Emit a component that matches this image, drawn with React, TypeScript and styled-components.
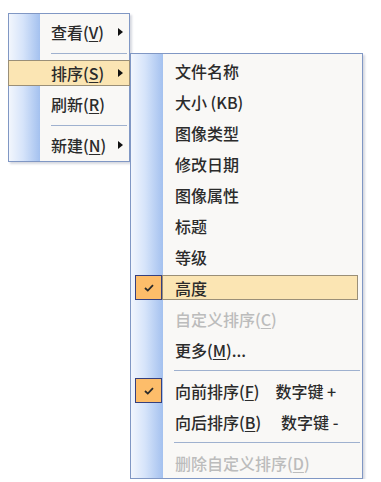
import styled, { createGlobalStyle } from "styled-components";

const GlobalStyle = createGlobalStyle`
  html, body {
    margin: 0;
    padding: 0;
    background: #ffffff;
  }
  body {
    font-family: "Noto Sans CJK SC", "Noto Sans", sans-serif;
  }
`;

const gutter = (w: number) =>
  `linear-gradient(to right, #f2f6fd 0, #d6e4fa ${Math.round(w * 0.45)}px, #a4c1ef ${w}px, #f9f8f6 ${w}px)`;

const Stage = styled.div`
  display: flex;
  align-items: flex-start;
  padding: 13px 0 0 8px;
`;

const Menu = styled.div<{ $width: number; $top?: number; $gutter: number }>`
  box-sizing: border-box;
  width: ${({ $width }) => $width}px;
  margin-top: ${({ $top }) => $top ?? 0}px;
  border: 1px solid #8097c4;
  background: ${({ $gutter }) => gutter($gutter)};
  box-shadow: 2px 2px 2px rgba(90, 100, 130, 0.25);
  display: flex;
  flex-direction: column;
  position: relative;
`;

const LeftMenu = styled(Menu)`
  padding: 3px 0 0 0;
  z-index: 1;
`;

const SubMenu = styled(Menu)`
  padding: 1px 0 0 0;
  z-index: 2;
`;

const Row = styled.div`
  display: flex;
  height: 31px;
  box-sizing: border-box;
  font-size: 16px;
  font-weight: 500;
  color: #2b2b2b;
`;

const LeftRow = styled(Row)`
  padding: 2px 0 3px 0;
  margin: 0 -1px;
`;

const SubRow = styled(Row)`
  padding: 3px 4px 3px 4px;
`;

const Label = styled.div<{ $hot?: boolean; $indent: number; $disabled?: boolean }>`
  flex: 1;
  display: flex;
  align-items: center;
  box-sizing: border-box;
  padding-left: ${({ $indent }) => $indent}px;
  border: 1px solid ${({ $hot }) => ($hot ? "#9a8f78" : "transparent")};
  background: ${({ $hot }) => ($hot ? "#fbe5b3" : "transparent")};
  color: ${({ $disabled }) => ($disabled ? "#bcbcbc" : "#2b2b2b")};
  white-space: nowrap;
`;

const CheckCell = styled.div<{ $checked?: boolean }>`
  flex: none;
  width: 27px;
  box-sizing: border-box;
  display: flex;
  align-items: center;
  justify-content: center;
  border: 1px solid ${({ $checked }) => ($checked ? "#36407e" : "transparent")};
  background: ${({ $checked }) => ($checked ? "#fdbd6a" : "transparent")};
`;

const Key = styled.span`
  text-decoration: underline;
  text-underline-offset: 2px;
`;

const Shortcut = styled.span<{ $gap: number }>`
  margin-left: ${({ $gap }) => $gap}px;
`;

const Arrow = styled.span`
  margin-left: auto;
  margin-right: 6px;
  width: 0;
  height: 0;
  border-left: 5px solid #111;
  border-top: 4px solid transparent;
  border-bottom: 4px solid transparent;
`;

const Separator = styled.div<{ $indent: number }>`
  height: 10px;
  display: flex;
  align-items: center;
  padding-left: ${({ $indent }) => $indent}px;
  padding-right: 2px;

  &::after {
    content: "";
    flex: 1;
    height: 1px;
    background: #9fb1cf;
  }
`;

const Check = () => (
  <svg width="10" height="8" viewBox="0 0 10 8">
    <path d="M1 4 L3.8 6.6 L9 1.2" fill="none" stroke="#2a2a2a" strokeWidth="1.8" />
  </svg>
);

const Mn = ({ text, k, tail = "" }: { text: string; k: string; tail?: string }) => (
  <>
    {text}(<Key>{k}</Key>){tail}
  </>
);

type SubEntry = {
  text?: React.ReactNode;
  checked?: boolean;
  hot?: boolean;
  disabled?: boolean;
  sep?: boolean;
};

const subItems: SubEntry[] = [
  { text: "文件名称" },
  { text: "大小 (KB)" },
  { text: "图像类型" },
  { text: "修改日期" },
  { text: "图像属性" },
  { text: "标题" },
  { text: "等级" },
  { text: "高度", checked: true, hot: true },
  { text: <Mn text="自定义排序" k="C" />, disabled: true },
  { text: <Mn text="更多" k="M" tail="..." /> },
  { sep: true },
  {
    text: (
      <>
        <Mn text="向前排序" k="F" />
        <Shortcut $gap={16}>数字键 +</Shortcut>
      </>
    ),
    checked: true,
  },
  {
    text: (
      <>
        <Mn text="向后排序" k="B" />
        <Shortcut $gap={20}>数字键 -</Shortcut>
      </>
    ),
  },
  { sep: true },
  { text: <Mn text="删除自定义排序" k="D" />, disabled: true },
];

export default function App() {
  return (
    <>
      <GlobalStyle />
      <Stage>
        <LeftMenu $width={122} $gutter={31}>
          <LeftRow>
            <Label $indent={42}>
              <Mn text="查看" k="V" />
              <Arrow />
            </Label>
          </LeftRow>
          <Separator $indent={42} />
          <LeftRow>
            <Label $indent={42} $hot>
              <Mn text="排序" k="S" />
              <Arrow />
            </Label>
          </LeftRow>
          <LeftRow>
            <Label $indent={42}>
              <Mn text="刷新" k="R" />
            </Label>
          </LeftRow>
          <Separator $indent={42} />
          <LeftRow>
            <Label $indent={42}>
              <Mn text="新建" k="N" />
              <Arrow />
            </Label>
          </LeftRow>
        </LeftMenu>
        <SubMenu $width={233} $top={40} $gutter={32}>
          {subItems.map((item, i) =>
            item.sep ? (
              <Separator key={i} $indent={43} />
            ) : (
              <SubRow key={i}>
                <CheckCell $checked={item.checked}>{item.checked && <Check />}</CheckCell>
                <Label $indent={12} $hot={item.hot} $disabled={item.disabled}>
                  {item.text}
                </Label>
              </SubRow>
            )
          )}
        </SubMenu>
      </Stage>
    </>
  );
}
